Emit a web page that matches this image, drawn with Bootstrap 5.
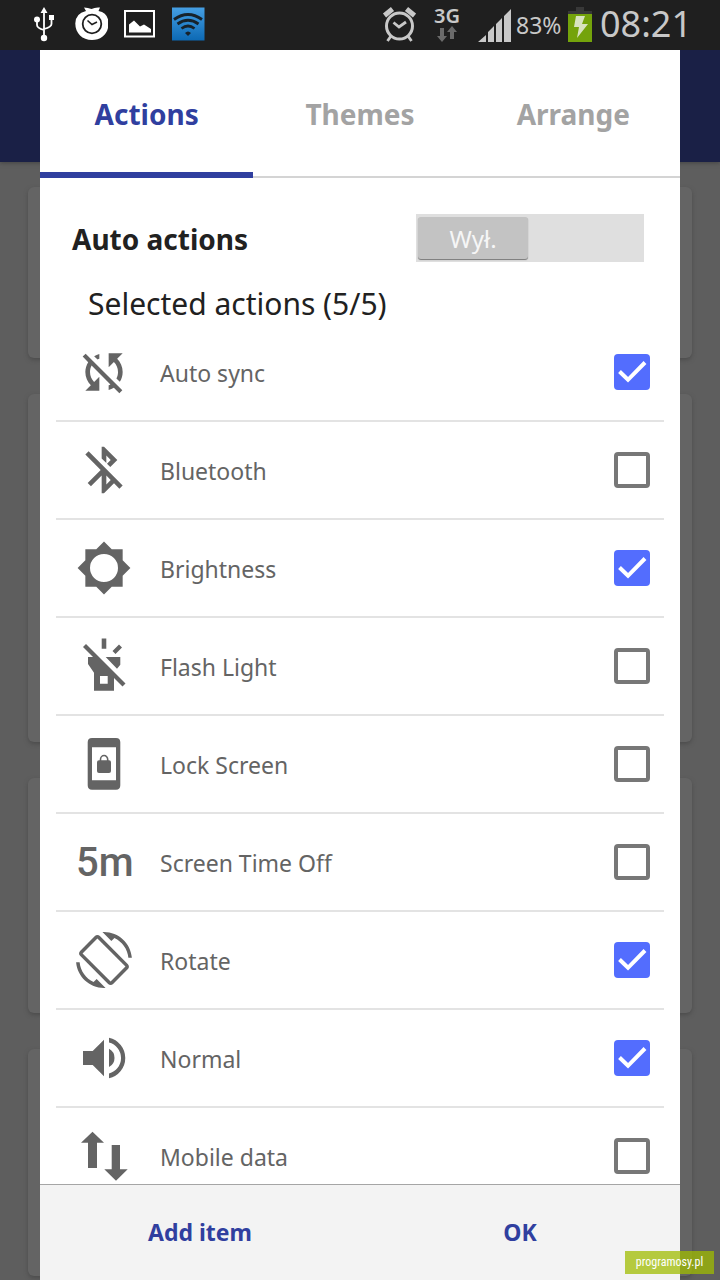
<!DOCTYPE html>
<html lang="en">
<head>
<meta charset="utf-8">
<meta name="viewport" content="width=device-width, initial-scale=1">
<title>Actions</title>
<link href="https://cdn.jsdelivr.net/npm/bootstrap@5.3.0/dist/css/bootstrap.min.css" rel="stylesheet">
<style>
  body { font-family: "Noto Sans", "Open Sans", sans-serif; background: #5e5e5e; color: #212121; }
  .status-bar { height: 50px; background: #1f1f1f; color: #c8c8c8; padding: 0 28px 0 32px; }
  .status-bar svg { flex: none; }
  .net { width: 32px; font-size: 20px; line-height: 18px; font-weight: 600; margin: 0 15px; }
  .pct { width: 56px; font-size: 23px; padding-left: 4px; }
  .clock { width: 92px; font-size: 36px; margin-left: 8px; line-height: 46px; padding-bottom: 2px; }
  .stage { display: grid; grid-template: minmax(0, 1fr) / minmax(0, 1fr); min-height: 0; }
  .stage > * { grid-area: 1 / 1; min-height: 0; }
  .app-bar { height: 112px; flex: none; background: #1a2046; box-shadow: 0 1px 4px #444; }
  .backdrop-list { padding: 25px 28px 0; gap: 36px; }
  .tile { flex: none; background: #646464; border-radius: 6px; box-shadow: 0 2px 4px #4c4c4c; }
  .tile-a { height: 171px; } .tile-b { height: 348px; } .tile-c { height: 235px; } .tile-d { height: 227px; }
  .sheet { margin: 0 40px; background: #fff; z-index: 1; }
  .tabs { height: 128px; flex: none; border-bottom: 2px solid #d4d4d4; }
  .tab-btn { border: 0; background: none; color: #a3a3a3; font-weight: 700; font-size: 28px; flex: 1 1 0; padding: 6px 0 0; margin-bottom: -2px; border-bottom: 6px solid transparent; }
  .tab-btn.active { color: #303f9f; border-bottom-color: #303f9f; }
  .auto-row { padding: 36px 36px 0 32px; }
  .auto-title { font-size: 28px; font-weight: 700; line-height: 50px; }
  .switch { width: 228px; height: 48px; border: 0; padding: 3px 2px; background: #dfdfdf; }
  .thumb { width: 110px; height: 42px; line-height: 44px; background: #c3c3c3; color: #f6f6f6; font-size: 24px; border-radius: 3px; box-shadow: 0 1px 1px #777; }
  .picked { font-size: 30px; line-height: 48px; padding: 16px 48px 0; height: 60px; font-weight: 400; margin: 0; }
  .rows { padding: 0 16px; min-height: 0; }
  .action { height: 98px; border-bottom: 2px solid #e3e3e3; padding: 0 14px 0 20px; color: #646464; }
  .action svg { width: 56px; height: 56px; fill: #646464; flex: none; }
  .action label { font-size: 23px; padding: 2px 0 0 28px; }
  .minutes { width: 56px; font: 500 40px/56px Roboto, sans-serif; padding-top: 2px; }
  .tick { appearance: none; width: 36px; height: 36px; flex: none; margin: 0; border: 4px solid #777; border-radius: 4px; background: #fff; }
  .tick:checked { border: 0; background: #536dfe url("data:image/svg+xml,%3Csvg xmlns='http://www.w3.org/2000/svg' viewBox='0 0 36 36'%3E%3Cpath d='M5.5 17.500l8.500 8.300L31 8.500' fill='none' stroke='%23fff' stroke-width='4'/%3E%3C/svg%3E"); }
  .actions-foot { height: 96px; flex: none; background: #f3f3f3; border-top: 1px solid #a5a5a5; }
  .foot-btn { flex: 1 1 0; border: 0; background: none; color: #303f9f; font-size: 23px; font-weight: 700; }
  .watermark { right: 6px; bottom: 6px; z-index: 2; width: 89px; height: 23px; background: rgba(159, 188, 0, .74); color: #fff; font: 12px/22px "Roboto Condensed", Roboto, sans-serif; }
</style>
</head>
<body class="vh-100 d-flex flex-column overflow-hidden position-relative">
<header class="status-bar d-flex align-items-center flex-shrink-0">
  <svg width="24" height="50" viewBox="32 0 24 50" aria-label="USB"><g fill="none" stroke="#fff" stroke-width="1.8"><path d="M44 11v27M37 20v5q0 3 7 5M51.500 18v6q0 3-7.500 5"/></g><path d="M44 7l-3.500 6h7zM49 15h5v5h-5z" fill="#fff"/><circle cx="37" cy="19.500" r="3" fill="#fff"/><circle cx="44" cy="38" r="3.200" fill="#fff"/></svg>
  <svg width="36" height="50" viewBox="72 0 36 50" class="ms-3" aria-label="Timer"><path d="M84 7.500q4 0 7.500 1.500Q95 7 100 7.500l-1.500 3.500q10 2 10 12.500c0 10-7 16.500-16.500 16.500s-16.700-6.500-16.700-16.500q0-10 10.700-12.500z" fill="#fff"/><circle cx="92" cy="24" r="9.300" fill="#fff" stroke="#1f1f1f" stroke-width="1.800"/><path d="M87.500 20.500l4.500 4 5-2.500" fill="none" stroke="#1f1f1f" stroke-width="1.600"/></svg>
  <svg width="32" height="50" viewBox="124 0 32 50" class="ms-3" aria-label="Picture"><path d="M125 11h29v25.500h-29z" fill="none" stroke="#fff" stroke-width="2"/><path d="M129 32.500v-8l5-4 6 6 4-2 7 4.500v3.500z" fill="#fff"/></svg>
  <svg width="34" height="50" viewBox="172 0 34 50" class="ms-3" aria-label="Wi-Fi"><defs><linearGradient id="w" x2="0" y2="1"><stop stop-color="#459fe4"/><stop offset="1" stop-color="#0c69b4"/></linearGradient></defs><path d="M172 7.500h32.500v33H172z" fill="url(#w)"/><g fill="none" stroke="#17222b" stroke-width="2.800"><path d="M174 19.500q14-10 28 0M177.500 24q10.500-7.500 21 0M181.500 28.500q6.500-5 13 0"/></g><path d="M185 33q3-3 6 0l-3 3z" fill="#17222b"/></svg>
  <svg width="34" height="50" viewBox="381 0 34 50" class="ms-auto" aria-label="Alarm"><g fill="none" stroke="#c8c8c8"><circle cx="398.500" cy="26" r="13" stroke-width="3"/><path d="M383.500 15.500l8-6.500M413.500 15.500l-8-6.500" stroke-width="5"/><path d="M390 36l-3.500 5M407 36l3.500 5M392.500 22.500l5.500 4.500 7-5" stroke-width="2.800"/></g></svg>
  <div class="net text-center">3G<svg class="d-block mx-auto" width="22" height="18" viewBox="0 0 22 18" fill="#6b6b6b"><path d="M4 3h4v8h3l-5 6-5-6h3zM14 14h4V7h3l-5-6-5 6h3z"/></svg></div>
  <svg width="34" height="50" viewBox="477 0 34 50" fill="#c8c8c8" aria-label="Signal"><path d="M477 42l8-7v7zM487 42V32l6-6v16zM495 42V24l6-6v24zM503 42V16l7-7v33z"/></svg>
  <span class="pct">83%</span>
  <svg width="24" height="50" viewBox="568 0 24 50" aria-label="Battery charging"><path d="M576 7h8v4h8v3h-24v-3h8z" fill="#383838"/><path d="M568 14h24v28h-24z" fill="#74a30b"/><path d="M576 16h9l-3 8h6l-11 14 2-11h-5z" fill="#d8e3c0"/></svg>
  <time class="clock">08:21</time>
</header>
<div class="stage flex-fill">
  <div class="d-flex flex-column overflow-hidden" aria-hidden="true">
    <div class="app-bar"></div>
    <div class="backdrop-list d-flex flex-column">
      <div class="tile tile-a"></div><div class="tile tile-b"></div><div class="tile tile-c"></div><div class="tile tile-d"></div>
    </div>
  </div>
  <main class="sheet d-flex flex-column">
    <nav class="tabs d-flex" role="tablist">
      <button class="tab-btn active" role="tab" aria-selected="true">Actions</button>
      <button class="tab-btn" role="tab">Themes</button>
      <button class="tab-btn" role="tab">Arrange</button>
    </nav>
    <div class="auto-row d-flex justify-content-between flex-shrink-0">
      <span class="auto-title" id="auto">Auto actions</span>
      <button class="switch" role="switch" aria-checked="false" aria-labelledby="auto"><span class="thumb d-block text-center">Wył.</span></button>
    </div>
    <h2 class="picked flex-shrink-0">Selected actions (5/5)</h2>
    <div class="rows flex-fill overflow-hidden">
      <div class="action d-flex align-items-center">
        <svg viewBox="0 0 24 24"><path d="M10 6.350V4.260c-.8.210-1.550.540-2.230.960l1.460 1.460c.250-.120.500-.240.770-.330zm-7.140-.940l2.360 2.360C4.450 8.990 4 10.440 4 12c0 2.210.910 4.200 2.360 5.640L4 20h6v-6l-2.240 2.240C6.680 15.150 6 13.660 6 12c0-1 .250-1.940.680-2.770l8.080 8.080c-.250.130-.500.250-.770.340v2.090c.8-.210 1.550-.540 2.230-.960l2.360 2.360 1.270-1.270L4.140 4.140 2.860 5.410zM20 4h-6v6l2.240-2.240C17.320 8.850 18 10.340 18 12c0 1-.250 1.940-.680 2.770l1.460 1.460C19.550 15.010 20 13.560 20 12c0-2.210-.910-4.200-2.360-5.640L20 4z"/></svg>
        <label class="flex-fill" for="c1">Auto sync</label><input class="tick" type="checkbox" id="c1" checked>
      </div>
      <div class="action d-flex align-items-center">
        <svg viewBox="0 0 24 24"><path d="M13 5.830l1.880 1.880-1.600 1.600 1.410 1.410 3.020-3.020L12 2h-1v5.030l2 2v-3.200zM5.410 4L4 5.410 10.590 12 5 17.590 6.410 19 11 14.410V22h1l4.290-4.290 2.300 2.290L20 18.590 5.410 4zM13 18.170v-3.760l1.880 1.880L13 18.170z"/></svg>
        <label class="flex-fill" for="c2">Bluetooth</label><input class="tick" type="checkbox" id="c2">
      </div>
      <div class="action d-flex align-items-center">
        <svg viewBox="0 0 24 24"><path d="M20 15.310L23.310 12 20 8.690V4h-4.690L12 .690 8.690 4H4v4.690L.690 12 4 15.310V20h4.690L12 23.310 15.310 20H20v-4.690zM12 18a6 6 0 1 1 0-12 6 6 0 0 1 0 12z"/></svg>
        <label class="flex-fill" for="c3">Brightness</label><input class="tick" type="checkbox" id="c3" checked>
      </div>
      <div class="action d-flex align-items-center">
        <svg viewBox="0 0 56 56"><path d="M25.700.500h4.600v10.200h-4.600zM36.500 13l6.500-6.500 3 3-6.500 6.500zM29.700 19h14.600v7.700l-3.300 4z"/><path d="M7 9l3-3 39.500 39.500-3 3z"/><path d="M12 19h8l18 18v15.700H18v-18L12 26zM24 38v7.700h7.700V38z" fill-rule="evenodd"/></svg>
        <label class="flex-fill" for="c4">Flash Light</label><input class="tick" type="checkbox" id="c4">
      </div>
      <div class="action d-flex align-items-center">
        <svg viewBox="0 0 56 56"><path fill-rule="evenodd" d="M16 2h24q4.300 0 4.300 4.300v43q0 4.400-4.300 4.400H16q-4.300 0-4.300-4.400v-43Q11.700 2 16 2zM16 11.300v33h24v-33z"/><rect x="21" y="24.300" width="14" height="12.700" rx="2"/><path d="M24.500 25v-1.500a3.600 4 0 0 1 7.200 0V25" fill="none" stroke="#646464" stroke-width="1.600"/></svg>
        <label class="flex-fill" for="c5">Lock Screen</label><input class="tick" type="checkbox" id="c5">
      </div>
      <div class="action d-flex align-items-center">
        <span class="minutes">5m</span>
        <label class="flex-fill" for="c6">Screen Time Off</label><input class="tick" type="checkbox" id="c6">
      </div>
      <div class="action d-flex align-items-center">
        <svg viewBox="0 0 24 24"><path d="M16.480 2.520c3.270 1.550 5.610 4.720 5.970 8.480h1.500C23.440 4.840 18.290 0 12 0l-.660.030 3.810 3.810 1.330-1.320zm-6.250-.770c-.590-.590-1.540-.590-2.120 0L1.750 8.110c-.590.590-.590 1.540 0 2.120l12.020 12.020c.590.590 1.540.590 2.120 0l6.360-6.360c.590-.590.590-1.540 0-2.120L10.230 1.750zm4.600 19.440L2.810 9.170l6.360-6.360 12.020 12.020-6.360 6.360zm-7.310.290C4.250 19.940 1.910 16.760 1.550 13H.050C.560 19.160 5.710 24 12 24l.660-.030-3.810-3.810-1.330 1.320z"/></svg>
        <label class="flex-fill" for="c7">Rotate</label><input class="tick" type="checkbox" id="c7" checked>
      </div>
      <div class="action d-flex align-items-center">
        <svg viewBox="0 0 56 56"><path d="M7 21h9.700L28 9.700v36.600L16.700 35H7zM33 18.700q5.500 3 5.500 9.200T33 37zM33 7.700a20.800 20.800 0 0 1 0 40.600v-4.800a16 16 0 0 0 0-31z"/></svg>
        <label class="flex-fill" for="c8">Normal</label><input class="tick" type="checkbox" id="c8" checked>
      </div>
      <div class="action d-flex align-items-center">
        <svg viewBox="0 0 56 56"><path d="M16.500 3.700L28 14.700h-7V40h-9V14.700H5zM35.700 17H44v24.300h7.700L40 52.700 28.300 41.300h7.400z"/></svg>
        <label class="flex-fill" for="c9">Mobile data</label><input class="tick" type="checkbox" id="c9">
      </div>
    </div>
    <footer class="actions-foot d-flex">
      <button class="foot-btn">Add item</button>
      <button class="foot-btn">OK</button>
    </footer>
  </main>
</div>
<div class="watermark position-absolute text-center">programosy.pl</div>
<script src="https://cdn.jsdelivr.net/npm/bootstrap@5.3.0/dist/js/bootstrap.bundle.min.js"></script>
</body>
</html>
